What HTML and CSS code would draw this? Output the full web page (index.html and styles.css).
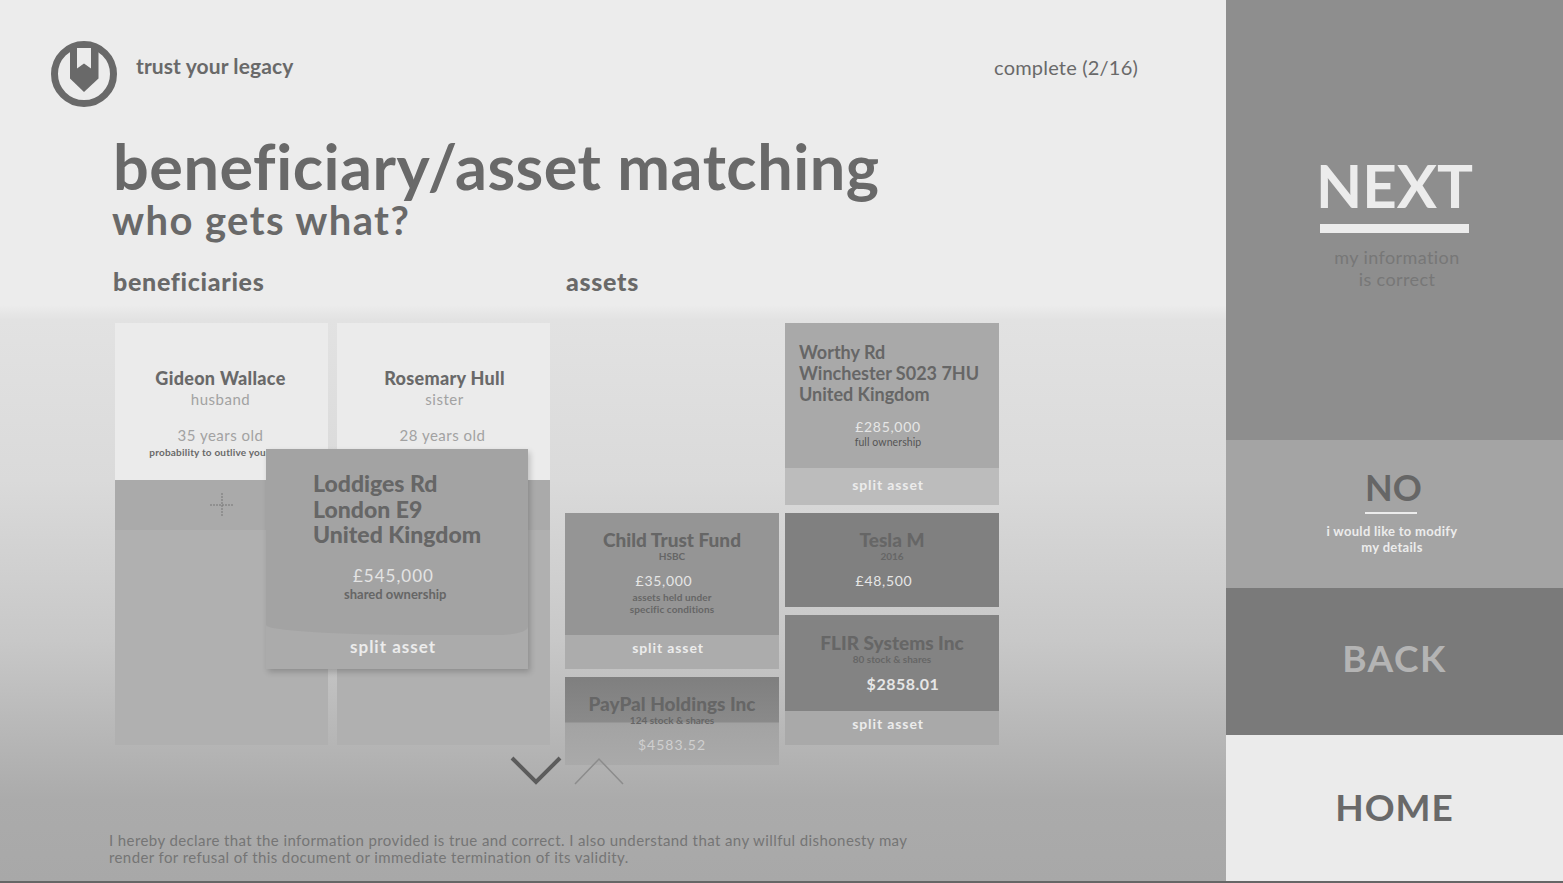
FILE: index.html
```html
<!DOCTYPE html>
<html lang="en">
  <head>
    <meta charset="UTF-8" />
    <title>Beneficiary/asset matching</title>
    <link rel="stylesheet" href="styles.css">
  </head>
  <body>
    <main class="main">
      <header class="top">
        <div class="brand">
          <svg class="logo" viewBox="0 0 66 66" width="66" height="66">
            <circle cx="33" cy="33" r="29.5" fill="none" stroke="#696969" stroke-width="7" />
            <path d="M19 5H47.5V37.5L33 51L19 37.5Z" fill="#696969" />
            <path d="M26 7H40V27.5L33 22.5L26 27.5Z" fill="#ececec" />
          </svg>
          <span class="brand-name">trust your legacy</span>
        </div>
        <span class="progress">complete (2/16)</span>
      </header>

      <h1 class="title">beneficiary/asset matching</h1>
      <h2 class="subtitle">who gets what?</h2>

      <div class="board">
        <section class="beneficiaries">
          <h3>beneficiaries</h3>
          <div class="person-list">
            <div class="person">
              <div class="person-card">
                <div class="person-name">Gideon Wallace</div>
                <div class="person-rel">husband</div>
                <div class="person-age">35 years old</div>
                <div class="person-prob">probability to outlive you: 68%</div>
              </div>
              <div class="person-add">
                <svg viewBox="0 0 24 24" width="24" height="24">
                  <path d="M12 0V24M0 12H24" stroke="#777" stroke-width="1" stroke-dasharray="2 1" fill="none" />
                </svg>
              </div>
              <div class="person-drop"></div>
            </div>
            <div class="person">
              <div class="person-card">
                <div class="person-name">Rosemary Hull</div>
                <div class="person-rel">sister</div>
                <div class="person-age">28 years old</div>
                <div class="person-prob">probability to outlive you: 70%</div>
              </div>
              <div class="person-add"></div>
              <div class="person-drop"></div>
            </div>
          </div>
        </section>

        <section class="assets">
          <h3>assets</h3>
          <div class="asset-columns">
            <div class="asset-col asset-col-left">
              <div class="asset">
                <div class="asset-body child">
                  <div class="asset-name">Child Trust Fund</div>
                  <div class="asset-sub">HSBC</div>
                  <div class="asset-price">£35,000</div>
                  <div class="asset-note">assets held under<br>specific conditions</div>
                </div>
                <div class="split split-child">split asset</div>
              </div>
              <div class="asset">
                <div class="asset-body paypal">
                  <div class="asset-name">PayPal Holdings Inc</div>
                  <div class="asset-sub">124 stock &amp; shares</div>
                  <div class="asset-price">$4583.52</div>
                </div>
              </div>
            </div>
            <div class="asset-col">
              <div class="asset">
                <div class="asset-body house">
                  <div class="asset-address">Worthy Rd<br>Winchester S023 7HU<br>United Kingdom</div>
                  <div class="asset-price">£285,000</div>
                  <div class="asset-note plain">full ownership</div>
                </div>
                <div class="split split-house">split asset</div>
              </div>
              <div class="asset">
                <div class="asset-body tesla">
                  <div class="asset-name">Tesla M</div>
                  <div class="asset-sub">2016</div>
                  <div class="asset-price">£48,500</div>
                </div>
              </div>
              <div class="asset">
                <div class="asset-body flir">
                  <div class="asset-name">FLIR Systems Inc</div>
                  <div class="asset-sub">80 stock &amp; shares</div>
                  <div class="asset-price bold">$2858.01</div>
                </div>
                <div class="split split-flir">split asset</div>
              </div>
            </div>
          </div>
        </section>

        <!-- card being dragged -->
        <div class="dragged">
          <div class="dragged-body">
            <div class="dragged-address">Loddiges Rd<br>London E9<br>United Kingdom</div>
            <div class="dragged-price">£545,000</div>
            <div class="dragged-note">shared ownership</div>
          </div>
          <div class="dragged-split">split asset</div>
        </div>

        <div class="arrows">
          <svg viewBox="0 0 52 30" width="52" height="30">
            <path d="M2 2L26 26L50 2" fill="none" stroke="#5c5c5c" stroke-width="4" />
          </svg>
          <svg viewBox="0 0 52 30" width="52" height="30">
            <path d="M2 28L26 3L50 28" fill="none" stroke="#8c8c8c" stroke-width="1.5" />
          </svg>
        </div>
      </div>

      <p class="legal">I hereby declare that the information provided is true and correct. I also understand that any willful dishonesty may<br>render for refusal of this document or immediate termination of its validity.</p>
    </main>

    <aside class="side">
      <div class="side-next">
        <div class="next-label">NEXT</div>
        <div class="next-note">my information<br>is correct</div>
      </div>
      <div class="side-no">
        <div class="no-label">NO</div>
        <div class="no-note">i would like to modify<br>my details</div>
      </div>
      <div class="side-back">BACK</div>
      <div class="side-home">HOME</div>
    </aside>
  </body>
</html>
```

FILE: styles.css
```css
/* General Styling */
html,
body {
  height: 100%;
}

body {
  margin: 0;
  box-sizing: border-box;
  height: 883px;
  overflow: hidden;
  display: flex;
  font-family: Lato, "Open Sans", sans-serif;
  font-variant-ligatures: none;
  color: #696969;
  background: #ececec;
  border-bottom: 2px solid #666;
}

/* Main area */
.main {
  width: 1226px;
  flex: none;
  display: flex;
  flex-direction: column;
  background: linear-gradient(#ececec 0, #ececec 305px, #e2e2e2 320px, #dadada 480px, #c8c8c8 640px, #ababab 800px, #a8a8a8 100%);
}

.top {
  display: flex;
  justify-content: space-between;
  align-items: flex-start;
  padding: 41px 88px 0 51px;
}

.brand {
  display: flex;
  align-items: flex-start;
  gap: 19px;
}

.logo {
  display: block;
}

.brand-name {
  font-size: 21px;
  font-weight: 700;
  line-height: 24px;
  letter-spacing: 0.1px;
  margin-top: 13px;
}

.progress {
  font-size: 20px;
  line-height: 24px;
  letter-spacing: 0.2px;
  margin-top: 14px;
}

.title {
  margin: 27px 0 0 113px;
  font-size: 63px;
  font-weight: 700;
  line-height: 64px;
  letter-spacing: 0.5px;
}

.subtitle {
  margin: 0 0 0 112px;
  font-size: 40px;
  font-weight: 700;
  line-height: 44px;
  letter-spacing: 1.4px;
}

/* Board */
.board {
  position: relative;
  display: flex;
  height: 495px;
  margin-top: 24px;
  padding-left: 113px;
}

.board h3 {
  margin: 0 0 27px;
  font-size: 25px;
  font-weight: 900;
  line-height: 30px;
  letter-spacing: 0.7px;
}

.beneficiaries {
  width: 453px;
  flex: none;
}

.person-list {
  display: flex;
  gap: 9px;
  padding-left: 2px;
}

.person {
  width: 213px;
}

.person-card {
  box-sizing: border-box;
  height: 157px;
  padding: 44px 2px 0 0;
  background: #ebebeb;
  text-align: center;
  overflow: hidden;
}

.person-name {
  font-size: 18px;
  font-weight: 900;
  line-height: 22px;
  letter-spacing: 0.3px;
}

.person-rel {
  font-size: 15px;
  line-height: 20px;
  color: #a2a2a2;
  letter-spacing: 0.5px;
}

.person + .person .person-name,
.person + .person .person-rel {
  padding-left: 4px;
}

.person-age {
  margin-top: 16px;
  font-size: 15px;
  line-height: 20px;
  color: #a2a2a2;
  letter-spacing: 0.5px;
}

.person-prob {
  font-size: 10px;
  font-weight: 700;
  line-height: 14px;
  letter-spacing: 0.2px;
  white-space: nowrap;
}

.person-add {
  height: 50px;
  background: #aaa;
  display: flex;
  align-items: center;
  justify-content: center;
}

.person-drop {
  height: 215px;
  background: #b0b0b0;
}

/* Assets */
.asset-columns {
  display: flex;
  gap: 6px;
  height: 442px;
  margin-left: -1px;
  overflow: hidden;
}

.assets {
  flex: none;
}

.asset-col {
  width: 214px;
  display: flex;
  flex-direction: column;
  gap: 8px;
}

.asset-col-left {
  padding-top: 190px;
}

.asset-body {
  box-sizing: border-box;
  text-align: center;
  overflow: hidden;
}

.asset-name {
  font-size: 19px;
  font-weight: 900;
  line-height: 22px;
  color: #666;
}

.asset-sub {
  font-size: 10px;
  font-weight: 700;
  line-height: 11px;
  color: #666;
}

.asset-price {
  margin-top: 10px;
  font-size: 14px;
  line-height: 18px;
  color: #e6e6e6;
  letter-spacing: 0.7px;
}

.asset-price.bold {
  padding-left: 22px;
  font-size: 16px;
  font-weight: 700;
  letter-spacing: 0.5px;
}

.asset-note {
  margin-top: 1px;
  font-size: 10px;
  font-weight: 700;
  line-height: 12px;
  letter-spacing: 0.1px;
  color: #666;
}

.asset-note.plain {
  margin-top: 0;
  font-size: 10.5px;
  font-weight: 400;
  color: #555;
}

.asset-address {
  padding-left: 14px;
  text-align: left;
  font-size: 18px;
  font-weight: 700;
  line-height: 21px;
  color: #666;
}

.split {
  padding-right: 8px;
  text-align: center;
  font-size: 14px;
  font-weight: 700;
  color: #ececec;
  letter-spacing: 0.9px;
}

.house {
  height: 145px;
  padding-top: 19px;
  background: #a9a9a9;
}

.house .asset-price {
  margin-top: 13px;
  padding-right: 8px;
}

.house .asset-note {
  padding-right: 8px;
}

.split-house {
  height: 37px;
  line-height: 34px;
  background: #bcbcbc;
}

.child {
  height: 122px;
  padding-top: 16px;
  background: #959595;
}

.child .asset-price,
.tesla .asset-price {
  padding-right: 16px;
}

.split-child {
  height: 34px;
  line-height: 25px;
  background: #acacac;
}

.paypal {
  height: 90px;
  padding-top: 16px;
  background: linear-gradient(#7f7f7f 0, #8a8a8a 45px, #a2a2a2 46px, #a4a4a4 52px, #aaa 100%);
}

.paypal .asset-price {
  color: #cfcfcf;
  letter-spacing: 1px;
}

.tesla {
  height: 94px;
  padding-top: 16px;
  background: #808080;
}

.flir {
  height: 96px;
  padding-top: 17px;
  background: #838383;
}

.split-flir {
  height: 34px;
  line-height: 25px;
  background: #a9a9a9;
}

/* Dragged card */
.dragged {
  position: absolute;
  left: 266px;
  top: 183px;
  width: 262px;
  background: #ababab;
  box-shadow: 2px 3px 6px rgba(0, 0, 0, 0.2);
}

/* lower edge of the body sags unevenly into the split strip */
.dragged-body {
  box-sizing: border-box;
  height: 186px;
  padding: 22px 0 0 47px;
  background: #a3a3a3;
  border-radius: 0 0 12% 60% / 0 0 8px 10px;
}

.dragged-address {
  font-size: 23px;
  font-weight: 900;
  line-height: 25.5px;
  color: #666;
}

.dragged-price {
  margin: 17px 0 0 40px;
  font-size: 17px;
  line-height: 22px;
  color: #e4e4e4;
  letter-spacing: 1px;
}

.dragged-note {
  margin: -1px 0 0 31px;
  font-size: 13px;
  font-weight: 700;
  line-height: 16px;
  color: #666;
}

.dragged-split {
  height: 34px;
  line-height: 24px;
  padding-left: 84px;
  font-size: 17px;
  font-weight: 700;
  color: #ececec;
  letter-spacing: 1px;
}

.arrows {
  position: absolute;
  left: 510px;
  top: 490px;
  display: flex;
  gap: 11px;
}

/* Footer text */
.legal {
  margin: auto 0 15px 109px;
  font-size: 15px;
  line-height: 17px;
  letter-spacing: 0.4px;
  color: #757575;
}

/* Side actions */
.side {
  flex: 1;
  display: flex;
  flex-direction: column;
  text-align: center;
}

.side-next {
  height: 440px;
  box-sizing: border-box;
  padding-top: 151px;
  background: #8e8e8e;
}

.next-label {
  width: 149px;
  margin: 0 auto;
  padding-bottom: 5px;
  border-bottom: 9px solid #ececec;
  font-size: 60px;
  font-weight: 700;
  line-height: 68px;
  text-indent: -4px;
  color: #ececec;
  white-space: nowrap;
}

.next-note {
  margin-top: 13px;
  padding-left: 5px;
  font-size: 18px;
  line-height: 22px;
  color: #777;
  letter-spacing: 0.4px;
}

.side-no {
  height: 148px;
  box-sizing: border-box;
  padding: 24px 5px 0 0;
  background: #a4a4a4;
}

.no-label {
  width: 52px;
  margin: 0 auto;
  padding-bottom: 2px;
  border-bottom: 2px solid #ececec;
  font-size: 36px;
  font-weight: 700;
  line-height: 46px;
  color: #666;
  white-space: nowrap;
  position: relative;
  left: -1px;
}

.no-note {
  margin-top: 9px;
  font-size: 13px;
  font-weight: 700;
  line-height: 16px;
  letter-spacing: 0.3px;
  color: #ececec;
}

.side-back {
  height: 147px;
  line-height: 140px;
  background: #7a7a7a;
  font-size: 37px;
  font-weight: 700;
  letter-spacing: 1.5px;
  color: #b4b4b4;
}

.side-home {
  flex: 1;
  line-height: 143px;
  background: #ebebeb;
  font-size: 37px;
  font-weight: 700;
  letter-spacing: 1px;
  color: #696969;
}
```
